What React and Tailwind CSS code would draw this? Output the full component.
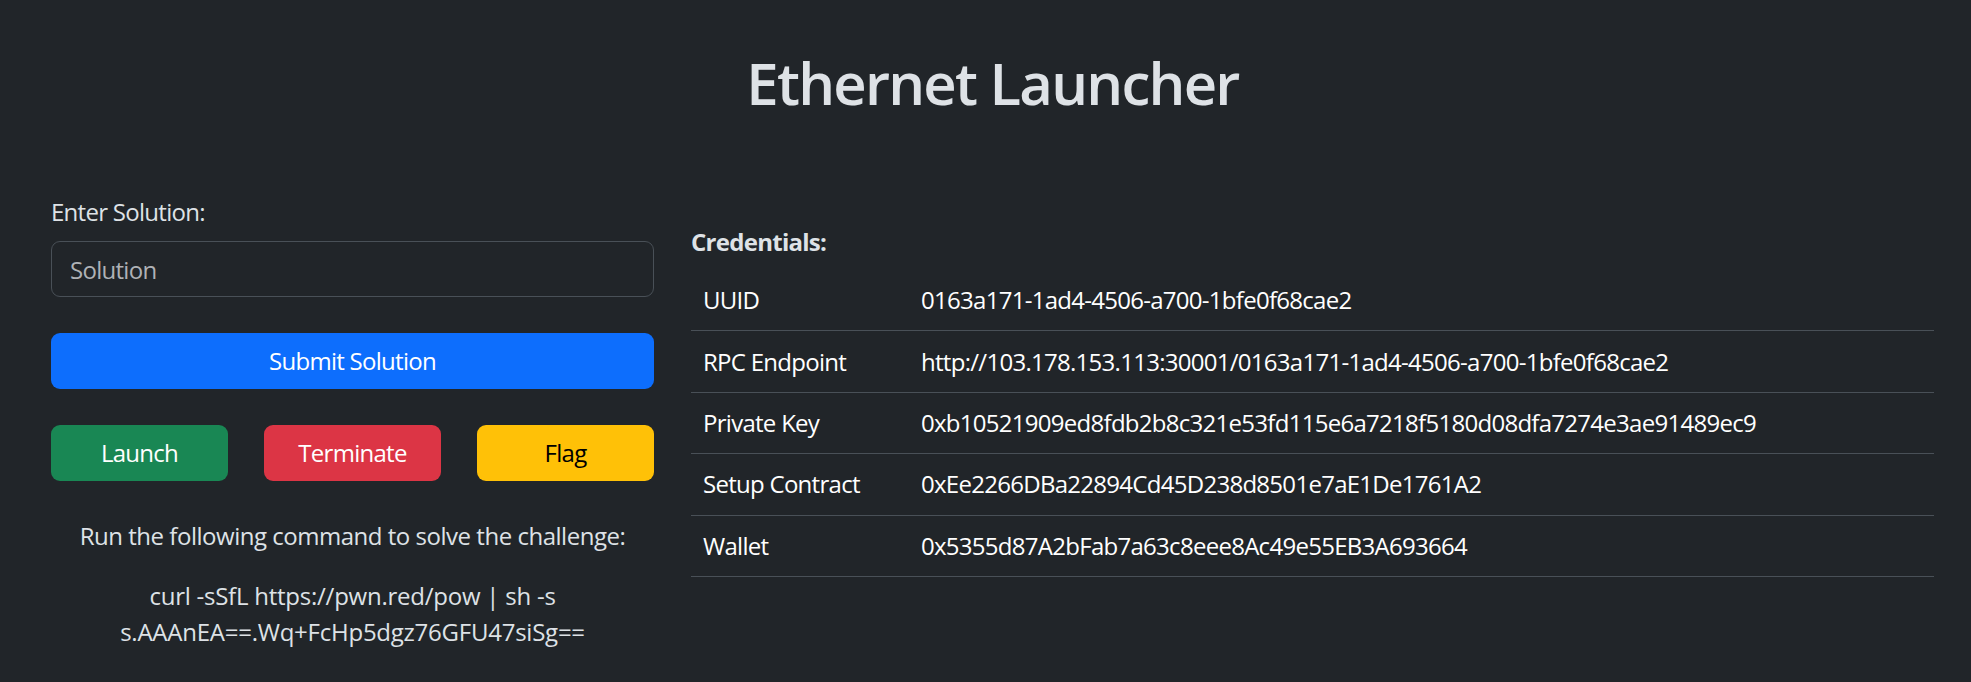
export default function App() {
  const creds = [
    ["UUID", "0163a171-1ad4-4506-a700-1bfe0f68cae2"],
    ["RPC Endpoint", "http://103.178.153.113:30001/0163a171-1ad4-4506-a700-1bfe0f68cae2"],
    ["Private Key", "0xb10521909ed8fdb2b8c321e53fd115e6a7218f5180d08dfa7274e3ae91489ec9"],
    ["Setup Contract", "0xEe2266DBa22894Cd45D238d8501e7aE1De1761A2"],
    ["Wallet", "0x5355d87A2bFab7a63c8eee8Ac49e55EB3A693664"],
  ];

  return (
    <div
      className="min-h-screen bg-[#212529] text-[#dee2e6] pl-[51px] pr-[37px] text-[24px] leading-[36px] tracking-[-0.03em]"
      style={{ fontFamily: '"Open Sans", "Noto Sans", sans-serif' }}
    >
      <h1 className="pt-[47px] text-center text-[58px] leading-[72px] font-semibold tracking-[-0.03em]">
        Ethernet Launcher
      </h1>

      <div className="mt-[75px] flex items-start gap-[37px]">
        {/* left: solution form */}
        <div className="w-[603px] shrink-0">
          <label className="block mb-[11px]">Enter Solution:</label>
          <input
            type="text"
            placeholder="Solution"
            className="block w-full h-[56px] px-[18px] bg-[#212529] border border-[#495057] rounded-[9px] text-[#dee2e6] placeholder:text-[#afb2b6] outline-none"
          />
          <button className="mt-[36px] w-full h-[56px] rounded-[9px] bg-[#0d6efd] text-white">
            Submit Solution
          </button>
          <div className="mt-[36px] grid grid-cols-3 gap-[36px]">
            <button className="h-[56px] rounded-[9px] bg-[#198754] text-white">Launch</button>
            <button className="h-[56px] rounded-[9px] bg-[#dc3545] text-white">Terminate</button>
            <button className="h-[56px] rounded-[9px] bg-[#ffc107] text-black">Flag</button>
          </div>
          <div className="mt-[37px] text-center tracking-[-0.02em]">
            <p className="mb-[24px]">Run the following command to solve the challenge:</p>
            <p className="tracking-[-0.01em]">curl -sSfL https://pwn.red/pow | sh -s s.AAAnEA==.Wq+FcHp5dgz76GFU47siSg==</p>
          </div>
        </div>

        {/* right: credentials table */}
        <div className="flex-1 pt-[30px]">
          <div className="font-bold mb-[10px]">Credentials:</div>
          <table className="w-full text-white">
            <tbody>
              {creds.map(([k, v]) => (
                <tr key={k} className="border-b border-[#495057]">
                  <td className="w-[218px] px-3 py-[12.2px]">{k}</td>
                  <td className="px-3 py-[12.2px]">{v}</td>
                </tr>
              ))}
            </tbody>
          </table>
        </div>
      </div>
    </div>
  );
}
